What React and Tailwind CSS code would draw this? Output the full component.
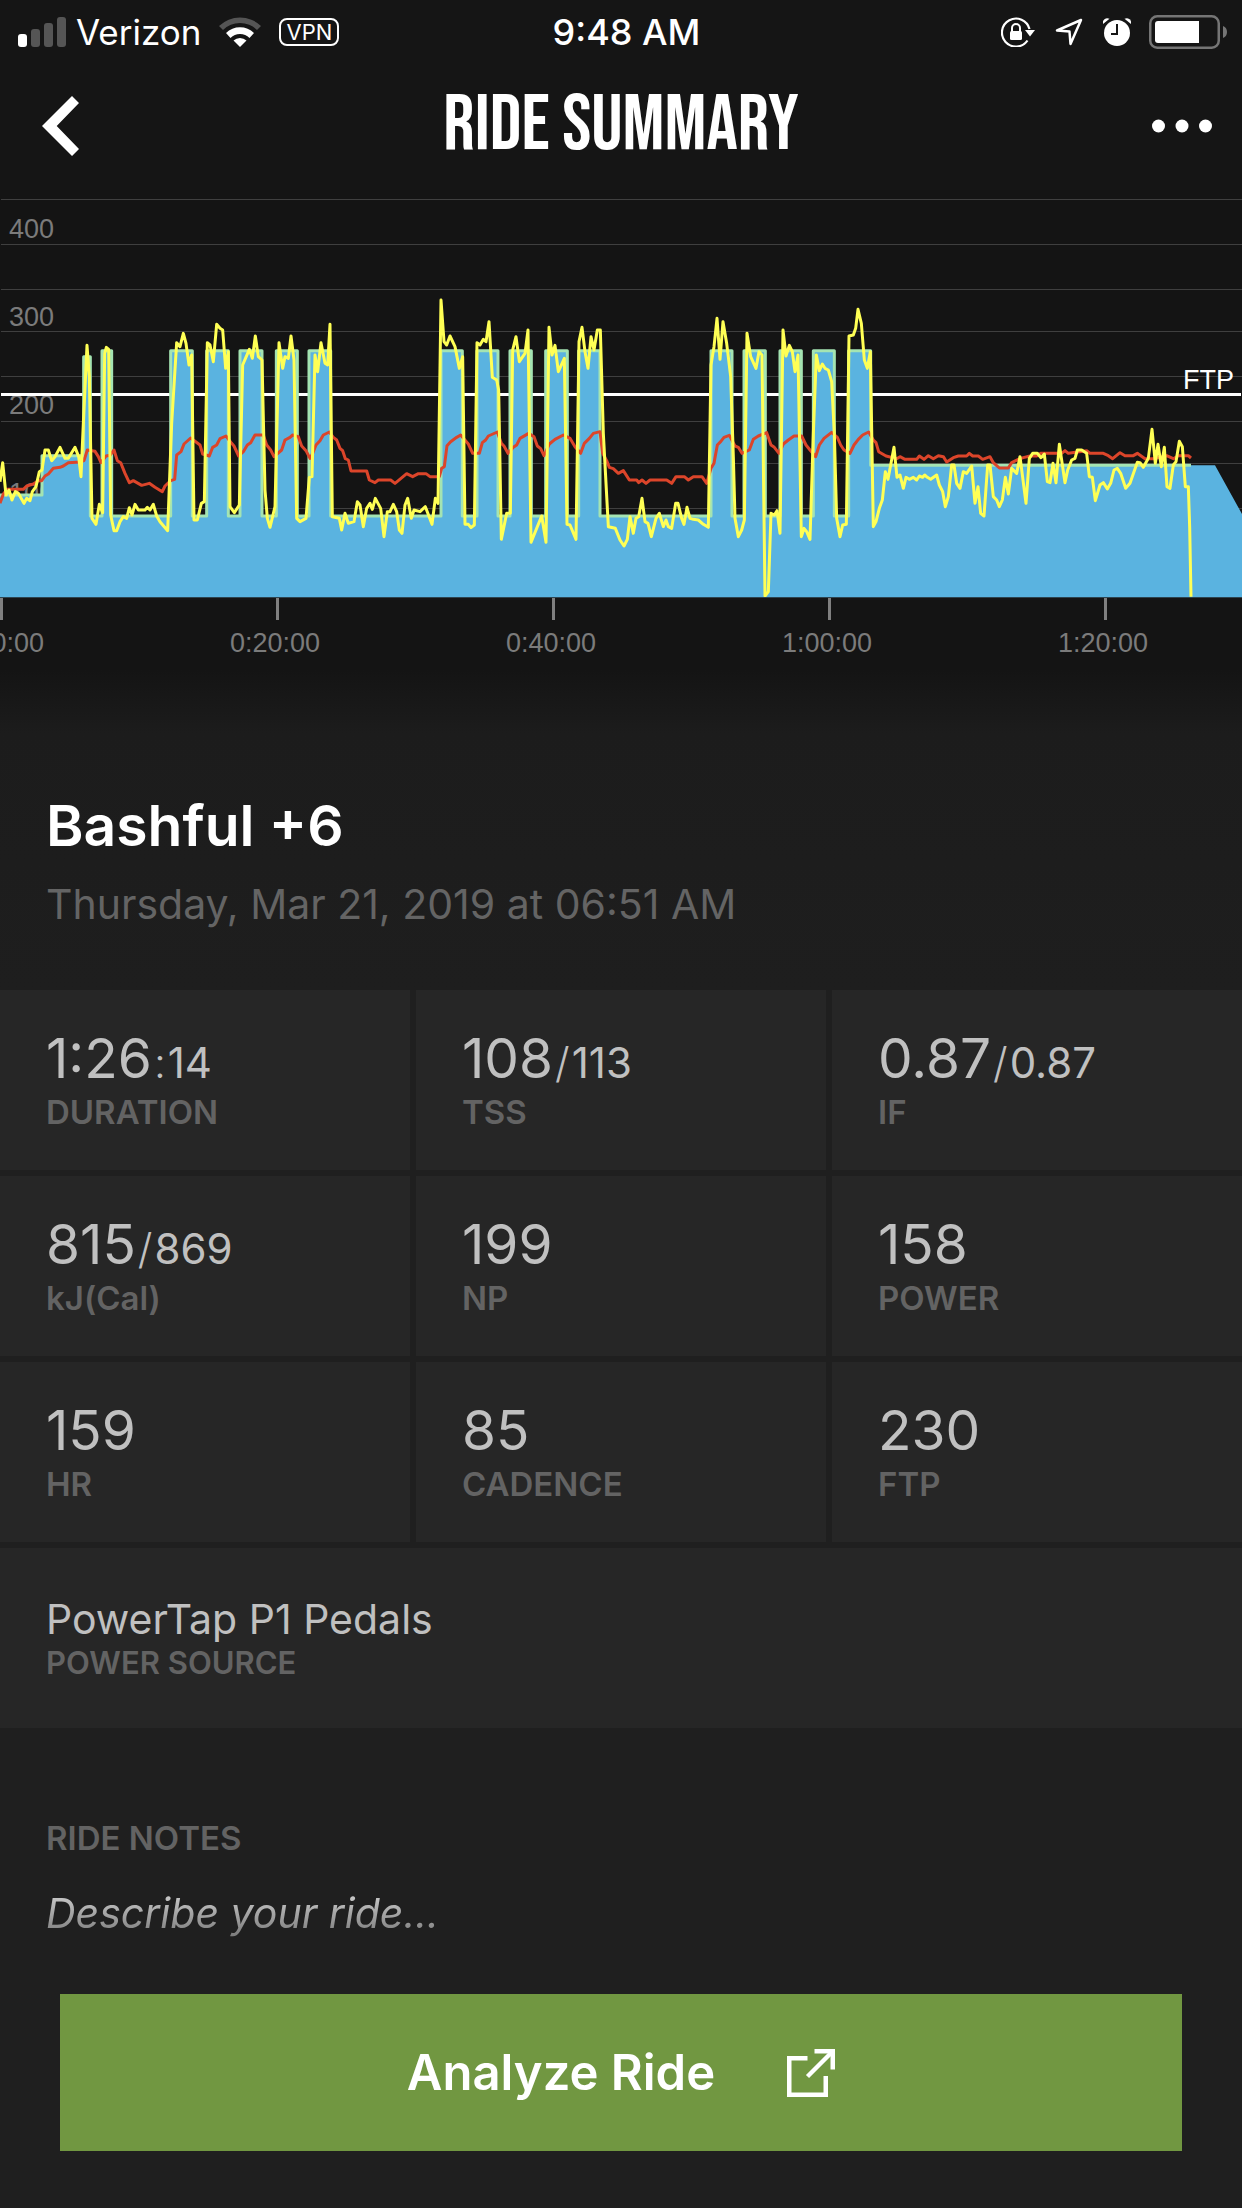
import { useState } from 'react';

const STATS = [
  { label: 'DURATION', value: '1:26', separator: ':', extra: '14' },
  { label: 'TSS', value: '108', separator: '/', extra: '113' },
  { label: 'IF', value: '0.87', separator: '/', extra: '0.87' },
  { label: 'kJ(Cal)', value: '815', separator: '/', extra: '869' },
  { label: 'NP', value: '199' },
  { label: 'POWER', value: '158' },
  { label: 'HR', value: '159' },
  { label: 'CADENCE', value: '85' },
  { label: 'FTP', value: '230' },
];

const GRID_LINES = [28, 163, 298, 424, 559, 694, 820, 955];

const WATT_LABELS = [
  { text: '400', y: 48 },
  { text: '300', y: 136 },
  { text: '200', y: 224 },
  { text: '100', y: 312 },
];

const TIME_LABELS = [
  { text: '0:00:00', x: 1 },
  { text: '0:20:00', x: 277 },
  { text: '0:40:00', x: 553 },
  { text: '1:00:00', x: 829 },
  { text: '1:20:00', x: 1105 },
];

// Planned workout, as steps
const TARGET =
  '0,915 126,915 126,797 251,797 251,500 271,500 271,978 306,978 306,482 335,482 335,978 512,978 512,482 577,482 577,978 620,978 620,482 685,482 685,978 720,978 720,482 786,482 786,978 829,978 829,482 892,482 892,978 927,978 927,482 992,482 992,978 1323,978 1323,482 1387,482 1387,978 1431,978 1431,482 1494,482 1494,978 1530,978 1530,482 1594,482 1594,978 1637,978 1637,482 1702,482 1702,978 1736,978 1736,482 1800,482 1800,978 2133,978 2133,482 2196,482 2196,978 2232,978 2232,482 2296,482 2296,978 2340,978 2340,482 2404,482 2404,978 2440,978 2440,482 2503,482 2503,978 2546,978 2546,482 2612,482 2612,826 3573,826';

// Recorded traces, split in sections that each start at their own x
const POWER = [
  [0, '0,875 8,818 18,915 27,900 36,930 46,905 55,910 72,940 80,925 90,932 97,905 108,890 118,845 126,840 135,780 145,780 155,812 165,800 180,772 195,805 205,805 225,772 236,800 243,860 250,700 261,466 268,560 276,985 288,1003 298,943 308,968 314,490 319,472 326,478 332,975 342,1022 350,1022 360,995 370,980 380,985 388,953 396,975 405,943 415,960 435,960 442,952 450,960 460,943 470,978 480,995 503,1022 515,700 530,458 540,470 550,430 558,460 567,525 575,495 582,990 592,990 604,940 613,935 622,458 630,465 640,515 650,403 660,415 668,420 677,535 685,485 690,950 703,968 718,945 728,525 748,478 757,505 766,438 775,500 786,510 795,900 802,985 810,1012 825,950 837,458 848,535 855,500 865,505 873,438 882,510 890,985 900,995 918,985 928,862 936,860 945,495 953,545 963,458 975,520 983,525 990,403 997,980 1018,985'],
  [1020, '5,1020 15,970 25,1000 42,995 52,935 60,945 70,1010 80,955 90,940 97,958 106,925 122,955 132,1040 142,965 150,965 160,943 170,965 178,1020 186,1030 195,945 203,925 214,985 222,960 240,965 256,950 276,1003 286,925 294,940 303,330 312,455 320,465 330,438 345,470 358,535 368,500 375,1003 385,1003 393,1013 403,1005 411,458 420,465 430,448 438,455 447,395 457,562 470,570 476,600 484,1048 500,970 511,970 518,480 528,440 538,515 555,490 564,420 573,1057 605,978 618,1057 627,412 636,495 645,466 655,545 673,505 681,1003 690,1005 708,1048 717,455 726,412 735,485 744,535 753,440 762,480 772,420 781,420 790,730 805,1010 826,1015 840,1050 852,1068 862,1048 870,980 880,1030 888,985 896,980'],
  [1920, '6,925 15,995 24,1000 34,1040 48,985 58,970 70,1010 78,990 85,1010 95,1015 107,940 114,940 125,985 132,1003 141,952 150,985 160,988 175,990 190,1003 205,1012 213,525 222,470 231,385 240,508 249,395 260,460 272,560 280,800 285,985 295,1040 305,1020 313,990 321,430 332,500 348,535 357,485 366,495 375,1218 385,1205 393,970 403,975 411,962 420,1030 429,420 438,498 448,466 457,485 465,545 474,495 484,1040 492,1015 500,1025 510,1048 520,730 529,495 538,542 547,522 555,535 565,540 575,575 583,730 590,985 600,1040 608,1005 619,1003 627,438 640,435 647,415 654,358 664,400 673,510 682,535 691,485 700,1010 708,995 718,955 727,930 736,845 744,868 762,772 771,862 780,855 790,895 798,862 808,868 820,862 830,870 838,858 848,862 854,855 862,862 872,868'],
  [2760, '50,855 58,885 68,905 76,950 85,920 95,825 102,825 110,880 120,895 130,845 140,850 155,828 165,940 174,890 182,970 192,978 203,825 210,825 220,920 230,930 238,950 247,930 256,862 265,912 275,835 290,850 300,800 318,940 328,805 338,790 352,790 363,803 373,792 382,875 390,878 399,820 408,878 418,763 435,878 443,840 455,810 465,805 472,780 485,780 500,790 508,860 517,862 526,932 540,885 550,878 562,897 572,880 582,840 592,835 602,850 617,895 630,880 652,817 660,818 670,832 685,805 696,718 706,820 714,763 724,830 733,772 741,890 750,895 760,825 768,815 778,754 787,770 796,890 805,890 809,1010 813,1220'],
];

const HEART_RATE = [
  [0, '0,940 10,912 22,898 70,898 80,888 100,882 115,872 125,872 135,858 145,852 160,835 180,832 190,828 205,818 240,816 252,812 262,780 285,784 295,800 303,818 318,798 330,796 342,780 352,812 362,818 375,850 388,878 400,872 425,886 448,880 465,892 487,905 495,888 512,872 524,868 530,795 543,785 552,762 572,744 588,756 600,765 608,792 628,798 638,772 650,765 660,746 678,738 695,760 702,768 716,798 730,785 742,765 752,758 765,735 790,735 800,765 812,780 822,800 845,780 855,750 870,742 878,735 895,740 905,768 918,782 930,805 938,790 948,765 960,752 970,735 988,726 1000,742 1010,750'],
  [1020, '0,775 8,782 16,806 25,810 33,843 80,843 88,870 105,878 115,870 152,870 165,880 200,851 218,860 235,851 258,851 270,860 298,860 305,835 313,830 321,767 332,755 350,742 362,735 385,762 398,790 418,790 427,758 437,750 445,738 472,726 484,760 492,768 504,790 520,772 530,765 540,745 566,730 582,740 592,768 602,776 612,797 628,762 645,748 670,735 690,745 705,770 722,790 733,760 748,745 760,730 780,725 788,790 800,812 808,832 820,836 835,850 850,842 868,870 890,870 896,878'],
  [1920, '6,870 18,880 30,870 80,870 95,880 108,860 133,860 145,870 160,860 186,860 200,880 213,835 222,820 232,765 242,755 252,742 268,736 285,768 295,772 306,790 328,780 340,748 355,738 380,728 393,765 403,772 417,790 430,762 445,750 462,738 485,738 498,765 510,780 527,800 538,765 552,745 575,727 592,742 602,765 612,780 630,790 642,765 655,748 668,735 686,726 700,750 708,758 716,785 738,798 770,806 780,800 795,808 830,808 838,798'],
  [2760, '12,808 25,797 40,806 55,797 70,800 80,816 100,803 115,798 140,798 148,790 158,798 175,798 188,808 210,800 220,818 238,834 265,834 275,818 295,808 310,803 330,798 350,798 362,790 425,790 435,782 445,790 500,782 510,790 550,790 565,797 578,806 600,788 615,797 640,797 652,790 675,806 700,806 740,797 760,806 775,797 805,797 813,804'],
];

const joinSections = (sections) =>
  sections
    .flatMap(([start, points]) =>
      points.split(' ').map((point) => {
        const [x, y] = point.split(',').map(Number);
        return `${start + x},${y}`;
      })
    )
    .join(' ');

const StatusBar = () => (
  <div className="grid h-16 grid-cols-[1fr_auto_1fr] items-center pl-[18px] pr-[15px] text-[35px] leading-10">
    <div className="flex items-center">
      <svg viewBox="0 0 48 30" className="mr-[10px] h-[30px] w-12" aria-label="Signal">
        <rect x="0" y="17" width="9" height="13" rx="3" fill="#fff" />
        <rect x="13" y="12" width="9" height="18" rx="3" fill="#555" />
        <rect x="26" y="6" width="9" height="24" rx="3" fill="#555" />
        <rect x="39" y="0" width="9" height="30" rx="3" fill="#555" />
      </svg>
      <span>Verizon</span>
      <svg viewBox="0 0 42 30" className="ml-[18px] h-[30px] w-[42px]" aria-label="Wi-Fi">
        <path d="M0 9 A30 30 0 0 1 42 9 L38 13 A24 24 0 0 0 4 13 Z" fill="#555" />
        <path d="M7 16 A20 20 0 0 1 35 16 L30.500 21 A13.500 13.500 0 0 0 11.500 21 Z" fill="#fff" />
        <path d="M14.500 23.500 A9.500 9.500 0 0 1 27.500 23.500 L21 30 Z" fill="#fff" />
      </svg>
      <span className="ml-[18px] flex h-7 w-[60px] items-center justify-center rounded-lg border-2 border-white text-[22px] leading-6">
        VPN
      </span>
    </div>
    <span className="pl-2 text-[36px] font-medium">9:48 AM</span>
    <div className="flex items-center justify-end">
      <svg viewBox="0 0 34 30" className="mr-5 h-[30px] w-[34px]" aria-label="Rotation lock">
        <path d="M26.500 23.500 A14 14 0 1 1 28.500 12" fill="none" stroke="#fff" strokeWidth="2.200" />
        <path d="M24 13 H34 L29 19.500 Z" fill="#fff" />
        <rect x="9" y="14" width="12" height="9" rx="1.500" fill="#fff" />
        <path d="M11 15 V11 A4 4 0 0 1 19 11 V15" fill="none" stroke="#fff" strokeWidth="2" />
      </svg>
      <svg viewBox="0 0 28 28" className="mr-5 h-7 w-7" aria-label="Location">
        <path
          d="M26 2 L2 12.500 L14.500 13.500 L15.500 26 Z"
          fill="none"
          stroke="#fff"
          strokeWidth="2.500"
          strokeLinejoin="round"
        />
      </svg>
      <svg viewBox="0 0 28 28" className="mr-[18px] h-7 w-7" aria-label="Alarm">
        <circle cx="14" cy="15" r="13" fill="#fff" />
        <path d="M0 6 A4.500 4.500 0 0 1 6.500 0.800 Z" fill="#fff" />
        <path d="M28 6 A4.500 4.500 0 0 0 21.500 0.800 Z" fill="#fff" />
        <path d="M14 6 V16 H8" fill="none" stroke="#151515" strokeWidth="2" />
      </svg>
      <svg viewBox="0 0 78 34" className="h-[34px] w-[78px]" aria-label="Battery">
        <rect x="1.250" y="1.250" width="68.500" height="31.500" rx="7" fill="none" stroke="#757575" strokeWidth="2.500" />
        <rect x="6" y="6" width="44" height="22" rx="3" fill="#fff" />
        <rect x="45" y="6" width="5" height="22" fill="#fff" />
        <path d="M74 11 Q78 12.500 78 17 T74 23 Z" fill="#757575" />
      </svg>
    </div>
  </div>
);

const RideChart = () => (
  <svg
    viewBox="0 0 1242 480"
    className="block h-auto w-full bg-[#141414] font-['Liberation_Sans',Arial,sans-serif] text-[27px]"
    role="img"
    aria-label="Ride power and heart rate"
  >
    {GRID_LINES.map((y) => (
      <rect key={y} x="1" y={Math.round(y / 3)} width="1241" height="1" fill="#3f3f3f" />
    ))}
    {WATT_LABELS.map(({ text, y }) => (
      <text key={text} x="9" y={y} fill="#7b7b7b">
        {text}
      </text>
    ))}
    <rect x="1" y="203" width="1240" height="3" fill="#fff" />

    {/* Traces are plotted on a grid three times as fine */}
    <svg viewBox="0 0 3726 1440" width="1242" height="480" fill="none" strokeLinejoin="round">
      <polygon points={`${TARGET} 3645,826 3726,972 3726,1221 0,1221`} fill="#5ab3e0" />
      <polyline points={TARGET} stroke="#a4e4b2" strokeWidth="9" />
      <polyline points={joinSections(HEART_RATE)} stroke="#dc452a" strokeWidth="9" />
      <polyline points={joinSections(POWER)} stroke="#ffff55" strokeWidth="9" />
    </svg>

    <rect x="0" y="407" width="1242" height="1" fill="#2c4450" />
    {TIME_LABELS.map(({ text, x }) => (
      <g key={text}>
        <rect x={x - 1} y="408" width="3" height="22" fill="#808080" />
        <text x={x - 2} y="462" textAnchor="middle" fill="#7b7b7b">
          {text}
        </text>
      </g>
    ))}
    <text x="1234" y="199" textAnchor="end" fill="#fff">
      FTP
    </text>
  </svg>
);

const Stat = ({ label, value, separator, extra }) => (
  <div className="bg-[#262626] pb-[38px] pl-[46px] pt-9">
    <dd className="flex h-16 items-baseline text-[55px] leading-[64px] text-[#c0c0c0]">
      {value}
      {extra && (
        <span className="text-[42px] leading-10">
          <span className="mx-[2px] font-light">{separator}</span>
          {extra}
        </span>
      )}
    </dd>
    <dt className="mt-[2px] text-[33px] font-semibold leading-10 text-[#636363]">{label}</dt>
  </div>
);

const App = () => {
  const [notes, setNotes] = useState('');

  return (
    <div className="min-h-screen bg-[#1f1f1f] font-[Inter,'Liberation_Sans',sans-serif] text-white">
      <header className="bg-[#151515]">
        <StatusBar />
        <nav className="grid h-[126px] grid-cols-[1fr_auto_1fr] items-center px-[30px] pb-[2px]">
          <button type="button" aria-label="Back" className="justify-self-start pl-3">
            <svg viewBox="0 0 37 60" className="h-[60px] w-[37px]" fill="#fff">
              <path d="M30 0 L37 7 L14.700 30 L37 53 L30 60 L0 30 Z" />
            </svg>
          </button>
          <h1 className="font-['Bebas_Neue','Liberation_Sans_Narrow','Liberation_Sans',sans-serif] text-[78px] font-normal leading-[84px]">
            RIDE SUMMARY
          </h1>
          <button type="button" aria-label="More" className="justify-self-end">
            <svg viewBox="0 0 60 14" className="h-[14px] w-[60px]" fill="#fff">
              <circle cx="6.500" cy="7" r="6.500" />
              <circle cx="30" cy="7" r="6.500" />
              <circle cx="53.500" cy="7" r="6.500" />
            </svg>
          </button>
        </nav>
      </header>

      <RideChart />

      <section className="bg-linear-to-b from-[#141414] via-[#1c1c1c] via-20% to-[#1e1e1e] px-[46px] pb-[62px] pt-[124px]">
        <h2 className="text-[57px] font-semibold leading-[64px]">Bashful +6</h2>
        <p className="mt-[22px] text-[41px] leading-[48px] text-[#646464]">
          Thursday, Mar 21, 2019 at 06:51 AM
        </p>
      </section>

      <dl className="grid grid-cols-3 gap-[6px]">
        {STATS.map((stat) => (
          <Stat key={stat.label} {...stat} />
        ))}
        <div className="col-span-3 bg-[#262626] pb-[45px] pl-[46px] pt-[47px]">
          <dd className="text-[41px] leading-[48px] text-[#c0c0c0]">PowerTap P1 Pedals</dd>
          <dt className="text-[31px] font-semibold leading-10 text-[#636363]">POWER SOURCE</dt>
        </div>
      </dl>

      <section className="px-[46px] pt-[90px]">
        <label htmlFor="notes" className="block text-[33px] font-semibold leading-10 text-[#636363]">
          RIDE NOTES
        </label>
        <input
          id="notes"
          type="text"
          value={notes}
          onChange={(e) => setNotes(e.target.value)}
          placeholder="Describe your ride..."
          className="mt-[31px] block h-12 w-full bg-transparent text-[41px] italic leading-[48px] outline-none [mask-image:linear-gradient(#000,rgba(0,0,0,0.5))] placeholder:text-[#d4d4d4]"
        />
      </section>

      <footer className="px-[60px] pb-[57px] pt-[57px]">
        <button
          type="button"
          className="flex h-[157px] w-full items-center justify-center gap-[72px] bg-[#719741] text-[49px] font-semibold leading-[60px]"
        >
          Analyze Ride
          <svg viewBox="0 0 48 48" className="h-12 w-12" fill="none" stroke="#fff" strokeWidth="4.500">
            <path d="M20.500 9.250 H2.250 V45.750 H38.750 V27" />
            <path d="M27.500 2.250 H45.750 V20.500" />
            <path d="M20.500 27.500 L45 3" />
          </svg>
        </button>
      </footer>
    </div>
  );
};

export default App;
